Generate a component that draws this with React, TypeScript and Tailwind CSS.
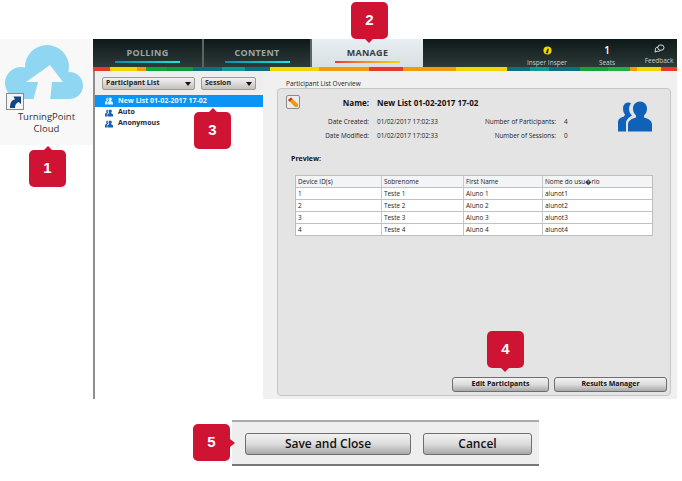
import React from 'react';

const stripe: [number, string][] = [
  [17, 'bg-[#e8392b]'], [27, 'bg-[#f5d400]'], [9, 'bg-[#f09a0c]'], [21, 'bg-[#12a33f]'], [26, 'bg-[#0c9a3e]'],
  [29, 'bg-[#0f6f7d]'], [23, 'bg-[#0c9c90]'], [25, 'bg-[#0f6f7d]'], [49, 'bg-[#f5d400]'], [50, 'bg-[#f09a0c]'],
  [34, 'bg-[#e8392b]'], [53, 'bg-[#f09a0c]'], [51, 'bg-[#f5d400]'], [23, 'bg-[#0f6f7d]'], [19, 'bg-[#0c9c90]'],
  [31, 'bg-[#0f6f7d]'], [28, 'bg-[#12a33f]'], [22, 'bg-[#1fb04a]'], [7, 'bg-[#f09a0c]'], [24, 'bg-[#f5d400]'], [16, 'bg-[#e8392b]'],
];

const rows = [
  ['1', 'Teste 1', 'Aluno 1', 'alunot1'],
  ['2', 'Teste 2', 'Aluno 2', 'alunot2'],
  ['3', 'Teste 3', 'Aluno 3', 'alunot3'],
  ['4', 'Teste 4', 'Aluno 4', 'alunot4'],
];

const People = ({ className }: { className?: string }) => (
  <svg viewBox="0 0 34 30" className={className} fill="currentColor">
    <path d="M10 1c-3 0-5 3-5 6s1 5 2 6l-1 2c-3 1-6 2-6 6v9h8v-8c0-4 3-6 6-8-2-2-3-4-3-7 0-2 1-4 2-5-1-1-2-1-3-1z" />
    <path d="M22 0c-4 0-7 3-7 7 0 3 1 5 3 7v2c-4 1-8 3-8 7v7h24v-7c0-4-4-6-8-7v-2c2-2 3-4 3-7 0-4-3-7-7-7z" />
  </svg>
);

const Callout = ({ n, side, className }: { n: number; side: 'up' | 'down' | 'right'; className: string }) => (
  <div className={`absolute w-[37px] h-[37px] rounded-[5px] bg-[#cf1433] flex items-center justify-center text-white text-[15px] font-bold font-['Liberation_Sans',sans-serif] ${className}`}>
    {n}
    {side === 'up' && <span className="absolute -top-[4px] left-[15px] w-0 h-0 border-x-[4px] border-x-transparent border-b-[4px] border-b-[#cf1433]" />}
    {side === 'down' && <span className="absolute -bottom-[4px] left-[14px] w-0 h-0 border-x-[4px] border-x-transparent border-t-[4px] border-t-[#cf1433]" />}
    {side === 'right' && <span className="absolute -right-[5px] top-[15px] w-0 h-0 border-y-[4px] border-y-transparent border-l-[5px] border-l-[#cf1433]" />}
  </div>
);

const Tab = ({ label, width, active }: { label: string; width: string; active?: boolean }) => (
  <div className={`flex flex-col items-center pt-[8px] h-full ${width} ${active ? 'bg-gradient-to-b from-[#e8eef2] to-[#d8e0e4] text-[#3c3c3c]' : 'border-r-2 border-[#5a6462] bg-gradient-to-b from-[#0e1a1a] to-[#2c3a38] text-[#9aa5a5]'}`}>
    <span className="text-[9px] leading-[12px] font-bold tracking-[0.3px]">{label}</span>
    <span className={`mt-[2px] w-[65px] h-[2px] ${active ? 'bg-gradient-to-r from-[#e8392b] to-[#f5d400]' : 'bg-gradient-to-r from-[#0a8fb0] to-[#19e6e6]'}`} />
  </div>
);

const Dropdown = ({ label, className }: { label: string; className: string }) => (
  <div className={`h-[13px] flex items-center justify-between pl-[3px] pr-[2px] rounded-[2px] border border-[#9a9a9a] bg-gradient-to-b from-[#f4f2f0] to-[#c4c0bc] text-[7px] font-bold text-[#222] ${className}`}>
    {label}
    <span className="w-0 h-0 border-x-[3px] border-x-transparent border-t-[4px] border-t-[#111] mr-[1px]" />
  </div>
);

const ListItem = ({ label, selected }: { label: string; selected?: boolean }) => (
  <div className={`flex items-center pl-[10px] gap-[5px] text-[7px] font-bold ${selected ? 'h-[12px] bg-[#0a94f5] text-[#eef6ff]' : 'h-[11px] text-[#1c2a3a]'}`}>
    <People className={`w-[8px] h-[8px] ${selected ? 'text-[#e6f2ff]' : 'text-[#1560b0]'}`} />
    {label}
  </div>
);

const Button = ({ label, className }: { label: string; className: string }) => (
  <div className={`flex items-center justify-center rounded-[3px] border border-[#6e6e6e] bg-gradient-to-b from-[#f2f2f2] via-[#dcdcdc] to-[#a8a8a8] text-[#111] ${className}`}>
    {label}
  </div>
);

export default function App() {
  return (
    <div className="relative w-[682px] h-[481px] overflow-hidden bg-white font-['Open_Sans',sans-serif]">
      <div className="pt-[39px] flex items-start">
        {/* desktop shortcut */}
        <div className="relative w-[93px] h-[106px] bg-[#f8f8f8] flex flex-col items-center">
          <svg viewBox="0 0 78 56" className="w-[78px] h-[56px] mt-[6px] -ml-[5px]">
            <g fill="#8fd6f2">
              <circle cx="16" cy="38" r="16" />
              <circle cx="42" cy="22" r="22" />
              <circle cx="64.5" cy="40.5" r="13.5" />
              <rect x="16" y="28" width="48" height="26" />
            </g>
            <path fill="#f8f8f8" d="M45 20 L58 37 L47 37 L45 56 L28 56 L33 37 L21 37 Z" />
          </svg>
          <div className="absolute left-[6px] top-[54px] w-[18px] h-[17px] border border-[#8a8a8a] bg-[#f4f4f4] flex items-center justify-center">
            <svg viewBox="0 0 14 14" className="w-[14px] h-[14px]">
              <path fill="#12467f" d="M2 13 C2 7 4 5 7 4.5 L5.5 1.5 L13 1.5 L13 9 L10.5 7 C8 8 7 10 7 13 Z" />
            </svg>
          </div>
          <div className="mt-[10px] text-[9.5px] text-center text-[#333]">
            <div className="h-[12px] leading-[12px]">TurningPoint</div>
            <div className="h-[12px] leading-[12px]">Cloud</div>
          </div>
        </div>

        {/* app window */}
        <div className="w-[584px] h-[360px] flex flex-col">
          <div className="h-[28px] flex bg-gradient-to-b from-[#0e1a1a] to-[#2c3a38]">
            <Tab label="POLLING" width="w-[111px]" />
            <Tab label="CONTENT" width="w-[108px]" />
            <Tab label="MANAGE" width="w-[111px]" active />
            <div className="flex-1 flex justify-end items-start text-[#c8d0d0] text-[6.5px] text-center">
              <div className="w-[60px] flex flex-col items-center pt-[7px]">
                <svg viewBox="0 0 10 10" className="w-[9px] h-[9px]">
                  <circle cx="5" cy="5" r="4.5" fill="#f0d800" />
                  <path d="M3 8 L5 3 L6.5 3 L5.5 8 Z" fill="#1a2424" />
                </svg>
                <span className="mt-[3px] leading-[9px]">Insper Insper</span>
              </div>
              <div className="w-[48px] ml-[6px] flex flex-col items-center pt-[5px]">
                <span className="text-[10px] leading-[12px] text-white font-semibold">1</span>
                <span className="mt-[2px] leading-[9px]">Seats</span>
              </div>
              <div className="w-[36px] ml-[10px] flex flex-col items-center pt-[5px]">
                <svg viewBox="0 0 12 10" className="w-[11px] h-[9px] text-[#e6ecec]" fill="none" stroke="currentColor" strokeWidth="1">
                  <ellipse cx="7.5" cy="4" rx="3.5" ry="3" />
                  <path d="M4.5 3.5 C2 3.5 1 5 1.5 6.5 L1 9 L3.5 8 C5 8.5 6.5 8 7 7" />
                </svg>
                <span className="mt-[3px] leading-[9px]">Feedback</span>
              </div>
            </div>
          </div>
          <div className="h-[4px] flex">
            {stripe.map(([w, c], i) => (
              <div key={i} className={c} style={{ width: w }} />
            ))}
          </div>

          <div className="flex-1 flex min-h-0">
            {/* list column */}
            <div className="w-[170px] border-l-2 border-[#8e8e8e] bg-white flex flex-col">
              <div className="h-[24px] bg-[#eeeeee] flex items-start pt-[6px] pl-[7px] gap-[6px]">
                <Dropdown label="Participant List" className="w-[93px]" />
                <Dropdown label="Session" className="w-[55px]" />
              </div>
              <ListItem label="New List 01-02-2017 17-02" selected />
              <ListItem label="Auto" />
              <ListItem label="Anonymous" />
            </div>

            {/* overview */}
            <div className="flex-1 bg-[#f0f0f0] pl-[14px] pr-[6px] pb-[3px] flex flex-col">
              <div className="h-[17px] pl-[9px] pt-[8px] text-[6.5px] leading-[9px] text-[#222]">Participant List Overview</div>
              <div className="relative flex-1 rounded-[4px] border border-[#c6c6c6] bg-[#e4e4e4] flex flex-col text-[6.4px] text-[#222]">
                <div className="absolute left-[8px] top-[6px] w-[14px] h-[14px] rounded-[2px] border border-[#8a8a8a] bg-[#ececec] flex items-center justify-center">
                  <svg viewBox="0 0 12 12" className="w-[12px] h-[12px]">
                    <path d="M1 4 L4 1.5 L11 8 L11 11 L8 11 Z" fill="#f09a0c" />
                    <path d="M1 4 L4 1.5 L5.5 3 L2.5 5.5 Z" fill="#d0302a" />
                  </svg>
                </div>
                <People className="absolute right-[18px] top-[12px] w-[34px] h-[31px] text-[#0f62b8]" />
                <div className="mt-[8px] flex items-center h-[11px]">
                  <div className="w-[91px] text-right text-[8px] font-bold text-[#111]">Name:</div>
                  <div className="ml-[8px] text-[8px] font-bold text-[#111]">New List 01-02-2017 17-02</div>
                </div>
                <div className="mt-[7px] grid grid-cols-[91px_8px_89px_90px_8px_10px] grid-rows-[14px_14px] items-center">
                  <div className="text-right">Date Created:</div><div />
                  <div>01/02/2017 17:02:33</div>
                  <div className="text-right">Number of Participants:</div><div />
                  <div>4</div>
                  <div className="text-right">Date Modified:</div><div />
                  <div>01/02/2017 17:02:33</div>
                  <div className="text-right">Number of Sessions:</div><div />
                  <div>0</div>
                </div>
                <div className="mt-[11px] ml-[13px] text-[7px] font-bold text-[#111] leading-[9px]">Preview:</div>
                <div className="mt-[12px] ml-[17px] w-[358px] border border-[#bdbdbd] bg-white text-[#222]">
                  <div className="grid grid-cols-[85px_82px_79px_1fr] h-[11px] items-center bg-[#f2f4f6]">
                    {['Device ID(s)', 'Sobrenome', 'First Name', 'Nome do usu\uFFFDrio'].map((h, i) => (
                      <div key={h} className={`pl-[2px] h-full leading-[11px] ${i ? 'border-l border-[#c8c8c8]' : ''}`}>{h}</div>
                    ))}
                  </div>
                  {rows.map((r) => (
                    <div key={r[0]} className="grid grid-cols-[85px_82px_79px_1fr] h-[12px] items-center border-t border-[#c0c0c0]">
                      {r.map((c, i) => (
                        <div key={i} className={`pl-[2px] h-full leading-[11px] ${i ? 'border-l border-[#c8c8c8]' : ''}`}>{c}</div>
                      ))}
                    </div>
                  ))}
                </div>
                <div className="mt-auto mb-[3px] mr-[3px] flex justify-end gap-[5px]">
                  <Button label="Edit Participants" className="w-[97px] h-[15px] text-[7px] font-bold" />
                  <Button label="Results Manager" className="w-[113px] h-[15px] text-[7px] font-bold" />
                </div>
              </div>
            </div>
          </div>
        </div>
      </div>

      {/* save bar */}
      <div className="mt-[21px] ml-[232px] w-[307px] h-[46px] border-t-2 border-b-2 border-t-[#aaaaaa] border-b-[#777777] bg-[#eeeeee] flex items-start pt-[11px] pl-[13px] gap-[12px]">
        <Button label="Save and Close" className="w-[166px] h-[22px] text-[12px] font-semibold" />
        <Button label="Cancel" className="w-[109px] h-[22px] text-[12px] font-semibold" />
      </div>

      <Callout n={1} side="up" className="left-[29px] top-[150px]" />
      <Callout n={2} side="down" className="left-[351px] top-[2px]" />
      <Callout n={3} side="up" className="left-[194px] top-[112px]" />
      <Callout n={4} side="down" className="left-[487px] top-[331px]" />
      <Callout n={5} side="right" className="left-[193px] top-[424px]" />
    </div>
  );
}
